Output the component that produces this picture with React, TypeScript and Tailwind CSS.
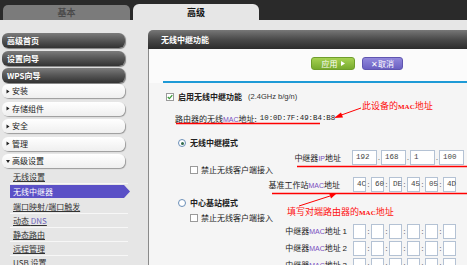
import React from "react";

function Tri({ down = false }: { down?: boolean }) {
  return (
    <svg width="4" height="5" viewBox="0 0 4 5" className="shrink-0">
      {down ? <path d="M0 1 L4 1 L2 4 Z" fill="#222" /> : <path d="M0.5 0.5 L3.5 2.5 L0.5 4.5 Z" fill="#222" />}
    </svg>
  );
}

function DarkBtn({ label, mt }: { label: string; mt: string }) {
  return (
    <div className={`${mt} ml-[2px] w-[123px] h-[15px] shrink-0 rounded-[6px] bg-linear-to-b from-[#7c7c7c] via-[#555555] to-[#333333] shadow-[1px_1px_1px_rgba(0,0,0,0.45)] text-white font-bold pl-[5px] flex items-center`}>
      {label}
    </div>
  );
}

function WhiteBtn({ label, mt, down = false }: { label: string; mt: string; down?: boolean }) {
  return (
    <div className={`${mt} ml-[2px] w-[123px] h-[14px] shrink-0 rounded-[6px] bg-linear-to-b from-white to-[#efefef] shadow-[1px_1px_1px_#9a9a9a] text-[#222] pl-[4px] flex items-center gap-[2px]`}>
      <Tri down={down} />
      <span>{label}</span>
    </div>
  );
}

function SubItem({ label, mt = "" }: { label: React.ReactNode; mt?: string }) {
  return (
    <div className={`${mt} ml-[10px] w-[118px] h-[14px] shrink-0 border-b border-[#f7f7f7] flex items-center pl-[3px]`}>
      <span className="underline underline-offset-1 text-[#333]">{label}</span>
    </div>
  );
}

function Sidebar() {
  return (
    <div className="w-[148px] flex flex-col shrink-0">
      <DarkBtn label="高级首页" mt="mt-[13px]" />
      <DarkBtn label="设置向导" mt="mt-[3px]" />
      <DarkBtn label="WPS向导" mt="mt-[2px]" />
      <WhiteBtn label="安装" mt="mt-[1px]" />
      <WhiteBtn label="存储组件" mt="mt-[3.5px]" />
      <WhiteBtn label="安全" mt="mt-[3.5px]" />
      <WhiteBtn label="管理" mt="mt-[3.5px]" />
      <WhiteBtn label="高级设置" mt="mt-[3.5px]" down />
      <SubItem label="无线设置" mt="mt-[2px]" />
      <div className="mt-[1px] ml-[10px] flex items-center h-[13px] shrink-0">
        <div className="w-[114px] h-[13px] bg-[#5a50c6] text-white flex items-center pl-[3px]">无线中继器</div>
        <svg width="6" height="13" viewBox="0 0 6 13"><path d="M0 0 L6 6.5 L0 13 Z" fill="#5a50c6" /></svg>
      </div>
      <SubItem label="端口映射/端口触发" mt="mt-[2px]" />
      <SubItem label={<>动态 <span className="text-[#6d63b8]">DNS</span></>} />
      <SubItem label="静态路由" />
      <SubItem label="远程管理" />
      <SubItem label="USB 设置" />
    </div>
  );
}

function Check({ checked = false }: { checked?: boolean }) {
  return (
    <div className="w-[8px] h-[8px] border border-[#9a9a9a] bg-white flex items-center justify-center shrink-0">
      {checked && (
        <svg width="6" height="6" viewBox="0 0 6 6"><path d="M0.8 3 L2.4 4.6 L5.3 1.2" stroke="#3a9a3a" strokeWidth="1.3" fill="none" /></svg>
      )}
    </div>
  );
}

function Radio({ on = false }: { on?: boolean }) {
  return (
    <div className="w-[8px] h-[8px] rounded-full border border-[#6b8fb8] bg-white flex items-center justify-center shrink-0">
      {on && <div className="w-[3px] h-[3px] rounded-full bg-[#2f6a4a]" />}
    </div>
  );
}

const P = "text-[#7a4fc0]";

function Box({ w, val }: { w: string; val?: string }) {
  return (
    <div className={`${w} h-[15px] border border-[#b4c2d4] bg-white flex items-center pl-[3px] font-['Liberation_Mono',monospace] text-[7.5px] text-[#444]`}>
      {val}
    </div>
  );
}

function MacBoxes({ vals }: { vals?: string[] }) {
  const v = vals ?? ["", "", "", "", "", ""];
  return (
    <div className="flex items-center">
      {v.map((x, i) => (
        <React.Fragment key={i}>
          {i > 0 && <span className="w-[5px] text-center text-[#666] text-[7px]">:</span>}
          <Box w="w-[13px]" val={x} />
        </React.Fragment>
      ))}
    </div>
  );
}

function Main() {
  return (
    <div className="flex-1 mt-[10px] flex flex-col">
      <div className="h-[19px] shrink-0 rounded-tl-[5px] bg-linear-to-b from-[#777777] via-[#4a4a4a] to-[#2c2c2c] text-white font-bold pl-[13px] flex items-center">
        无线中继功能
      </div>
      <div className="border-l border-[#8a8a8a] bg-[#f5f5f5] flex flex-col pb-[10px]">
        <div className="bg-[#fbfbfb] h-[34px] shrink-0 flex flex-col">
          <div className="mt-[8px] ml-[162px] flex gap-[7px]">
            <div className="w-[44px] h-[13px] rounded-[3px] border border-[#6f9e2c] bg-linear-to-b from-[#a6d152] to-[#78ab2e] text-white flex items-center justify-center gap-[3px]">
              应用
              <svg width="4" height="5" viewBox="0 0 4 5"><path d="M0 0 L4 2.5 L0 5 Z" fill="white" /></svg>
            </div>
            <div className="w-[41px] h-[13px] rounded-[3px] border border-[#5f55b0] bg-linear-to-b from-[#9288dc] to-[#6b60c2] text-white flex items-center justify-center">
              ✕取消
            </div>
          </div>
          <div className="mt-[11px] ml-[14px] h-[2px] bg-[#1e9ad6]" />
        </div>

        <div className="mt-[8px] h-[12px] shrink-0 ml-[17px] flex items-center">
          <Check checked />
          <span className="ml-[4px] font-bold">启用无线中继功能</span>
          <span className="ml-[6px] font-['Liberation_Sans',sans-serif] text-[7.5px] text-[#333]">(2.4GHz b/g/n)</span>
        </div>

        <div className="mt-[10px] h-[12px] shrink-0 ml-[26px] flex items-center">
          <span>路由器的无线<span className={`${P} font-['Liberation_Sans',sans-serif] text-[7px]`}>MAC</span>地址:</span>
          <span className="ml-[3px] font-['Liberation_Mono',monospace] text-[7.4px] text-[#222]">10:0D:7F:49:B4:B8</span>
        </div>

        <div className="mt-[12px] h-[12px] shrink-0 ml-[29px] flex items-center">
          <Radio on />
          <span className="ml-[4px] font-bold">无线中继模式</span>
        </div>

        <div className="mt-[1px] h-[15px] shrink-0 flex items-center">
          <div className="w-[192px] text-right">
            中继器<span className={`${P} font-['Liberation_Sans',sans-serif] text-[7px]`}>IP</span>地址
          </div>
          <div className="ml-[11px] flex items-center">
            <Box w="w-[25px]" val="192" />
            <span className="w-[4px] text-center text-[#666] text-[7px]">.</span>
            <Box w="w-[25px]" val="168" />
            <span className="w-[4px] text-center text-[#666] text-[7px]">.</span>
            <Box w="w-[25px]" val="1" />
            <span className="w-[4px] text-center text-[#666] text-[7px]">.</span>
            <Box w="w-[25px]" val="100" />
          </div>
        </div>

        <div className="-mt-[1px] h-[11px] shrink-0 ml-[41px] flex items-center">
          <Check />
          <span className="ml-[3px]">禁止无线客户端接入</span>
        </div>

        <div className="mt-[2px] h-[15px] shrink-0 flex items-center">
          <div className="w-[191px] text-right">
            基准工作站<span className={`${P} font-['Liberation_Sans',sans-serif] text-[7px]`}>MAC</span>地址
          </div>
          <div className="ml-[13px]">
            <MacBoxes vals={["4C", "60", "DE", "45", "05", "4D"]} />
          </div>
        </div>

        <div className="mt-[5px] h-[12px] shrink-0 ml-[29px] flex items-center">
          <Radio />
          <span className="ml-[4px] font-bold">中心基站模式</span>
        </div>

        <div className="mt-[3px] h-[11px] shrink-0 ml-[41px] flex items-center">
          <Check />
          <span className="ml-[3px]">禁止无线客户端接入</span>
        </div>

        {[1, 2, 3].map((n) => (
          <div key={n} className={`${n === 1 ? "mt-[1px]" : "mt-[2px]"} h-[15px] flex items-center shrink-0`}>
            <div className="w-[198px] text-right">
              中继器<span className={`${P} font-['Liberation_Sans',sans-serif] text-[7px]`}>MAC</span>地址 <span className="font-['Liberation_Sans',sans-serif] text-[8px]">{n}</span>
            </div>
            <div className="ml-[6px]">
              <MacBoxes />
            </div>
          </div>
        ))}
      </div>
    </div>
  );
}

function Overlay() {
  return (
    <>
      <svg className="absolute left-0 top-0 pointer-events-none" width="467" height="265" viewBox="0 0 467 265">
        <line x1="176" y1="123.5" x2="320" y2="123.5" stroke="#ff0000" strokeWidth="1.5" />
        <line x1="297" y1="166.5" x2="467" y2="166.5" stroke="#ff0000" strokeWidth="1.5" />
        <line x1="272" y1="193.5" x2="467" y2="193.5" stroke="#ff0000" strokeWidth="1.5" />
        <line x1="361" y1="108" x2="340" y2="115.5" stroke="#ff0000" strokeWidth="1" />
        <path d="M334 118 L341 112.5 L343 117.5 Z" fill="#ff0000" />
        <line x1="299" y1="206" x2="330" y2="196" stroke="#ff0000" strokeWidth="1" />
        <path d="M336 194 L329 193 L331 198.5 Z" fill="#ff0000" />
      </svg>
      <div className="absolute left-[362px] top-[101px] text-[9px] leading-none text-[#ff1010] whitespace-nowrap">
        此设备的<span className="font-['Liberation_Serif',serif] font-bold text-[7px]">MAC</span>地址
      </div>
      <div className="absolute left-[287px] top-[207px] text-[9px] leading-none text-[#ff1010] whitespace-nowrap">
        填写对端路由器的<span className="font-['Liberation_Serif',serif] font-bold text-[7px]">MAC</span>地址
      </div>
    </>
  );
}

export default function App() {
  return (
    <div className="relative w-[467px] h-[265px] overflow-hidden bg-[#e3e3e3] font-['Noto_Sans_CJK_SC',sans-serif] text-[8px] leading-none text-[#222]">
      <div className="h-[20px] bg-[#2a2a2a] flex items-end pl-[3px] gap-[3px]">
        <div className="w-[127px] h-[15px] rounded-t-[5px] bg-[#7b7b7b] flex items-center justify-center text-[9px] font-bold text-[#4a4a4a]">基本</div>
        <div className="w-[126px] h-[16px] rounded-t-[6px] bg-[#e6e6e6] flex items-center justify-center text-[9px] font-bold text-[#111]">高级</div>
      </div>
      <div className="flex bg-[#e6e6e6]">
        <Sidebar />
        <Main />
      </div>
      <Overlay />
    </div>
  );
}
